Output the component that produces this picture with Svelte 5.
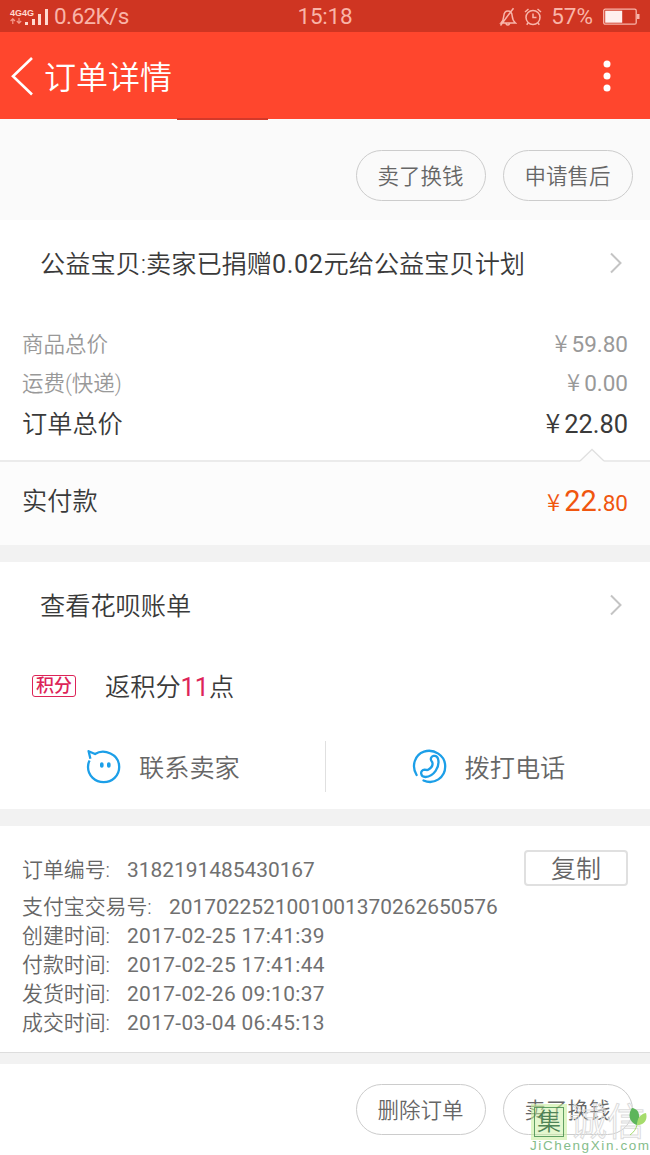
<script lang="ts">
  type Row = { label: string; value: string };

  const times: Row[] = [
    { label: '创建时间:', value: '2017-02-25 17:41:39' },
    { label: '付款时间:', value: '2017-02-25 17:41:44' },
    { label: '发货时间:', value: '2017-02-26 09:10:37' },
    { label: '成交时间:', value: '2017-03-04 06:45:13' }
  ];
</script>

{#snippet chevron()}
  <svg class="chevron" width="12" height="22" viewBox="0 0 12 22" fill="none" stroke="#c4c4c4" stroke-width="2">
    <path d="M1 1.5 10.5 11 1 20.5" />
  </svg>
{/snippet}

<div class="page">
  <div class="status">
    <div class="signal">
      <div class="nets">
        <span class="net">4G4G</span>
        <svg width="12" height="6" viewBox="0 0 12 6" fill="none" stroke="#f59b8d" stroke-width="1.2">
          <path d="M2.8 6V1M.6 3 2.8.8 5 3M9 0v5M6.8 3 9 5.2 11.2 3" />
        </svg>
      </div>
      <svg class="bars" width="24" height="17" viewBox="0 0 24 17" fill="#ffd9d0">
        <path d="M0 13h3v3H0zM7 10h3v6H7zM13 5h3v11h-3zM20 0h3v16h-3z" />
      </svg>
      <span class="speed">0.62K/s</span>
    </div>
    <span class="clock">15:18</span>
    <div class="status-right">
      <svg width="18" height="20" viewBox="0 0 18 20" fill="none" stroke="#f8b5aa" stroke-width="1.5">
        <path d="M2 16c2-2 2.600-4 2.800-7 .2-3 1.700-5 4.200-5s4 2 4.200 5c.2 3 .8 5 3.300 7zM7 16.500c.4 2 3 2 3.600 0M1.500 18.500 14.500 1.200" />
      </svg>
      <svg width="18" height="18" viewBox="0 0 18 18" fill="none" stroke="#f8b5aa" stroke-width="1.5">
        <circle cx="9" cy="9.500" r="7" />
        <path d="M9 5.500v4h3.500M1 4 4.500 1M13.500 1 17 4M4 15l-1.300 1.800M14 15l1.300 1.800" />
      </svg>
      <span class="percent">57%</span>
      <svg width="37" height="18" viewBox="0 0 37 18">
        <rect x=".7" y="1.200" width="32.500" height="15" rx="1.500" fill="none" stroke="#f8b5aa" stroke-width="1.300" />
        <rect x="2.200" y="2.700" width="17" height="12" fill="#fff0ee" />
        <rect x="34" y="6" width="2.500" height="5" fill="#f8b5aa" />
      </svg>
    </div>
  </div>

  <header>
    <svg width="24" height="40" viewBox="0 0 24 40" fill="none" stroke="#fff" stroke-width="2.600">
      <path d="M22 2 3 20.300 22 38.500" />
    </svg>
    <h1>订单详情</h1>
    <svg class="more" width="8" height="32" viewBox="0 0 8 32" fill="#fff">
      <circle cx="4" cy="4" r="3.500" /><circle cx="4" cy="16" r="3.500" /><circle cx="4" cy="28" r="3.500" />
    </svg>
    <i class="tab-mark"></i>
  </header>

  <div class="actions top">
    <button>卖了换钱</button>
    <button>申请售后</button>
  </div>

  <div class="link donate">
    <span>公益宝贝:卖家已捐赠<em>0.02</em>元给公益宝贝计划</span>
    {@render chevron()}
  </div>

  <div class="prices">
    <div class="price muted"><span>商品总价</span><b><i>¥</i>59.80</b></div>
    <div class="price muted"><span>运费(快递)</span><b><i>¥</i>0.00</b></div>
    <div class="price total"><span>订单总价</span><b><i>¥</i>22.80</b></div>
  </div>
  <div class="paid">
    <svg class="notch" width="26" height="14" viewBox="0 0 26 14">
      <path d="M1 13 13 1.500 25 13v1H1z" fill="#fcfcfc" />
      <path d="M1 13 13 1.500 25 13" fill="none" stroke="#e0e0e0" stroke-width="1.300" />
    </svg>
    <span>实付款</span>
    <b><i>¥</i><em>22</em>.80</b>
  </div>

  <div class="gap"></div>

  <div class="link bill">
    <span>查看花呗账单</span>
    {@render chevron()}
  </div>
  <div class="points">
    <span class="badge">积分</span>
    <span>返积分<em>11</em>点</span>
  </div>
  <div class="contact">
    <div class="contact-item">
      <svg width="36" height="36" viewBox="0 0 36 36" fill="none" stroke="#1c9fe8" stroke-width="2.300" stroke-linejoin="round">
        <path d="M4.400 9.800 2.600 2.200 9 5C18-.6 33.200 5 33.200 18c0 8.700-7 15.200-15.500 15.200S2 26.700 2 18c0-2.600.5-4.600 1.600-6.500" />
        <path d="M15.800 15v2M22.800 15v2" stroke-width="3.600" stroke-linecap="round" />
      </svg>
      <span>联系卖家</span>
    </div>
    <div class="contact-item">
      <svg width="36" height="36" viewBox="0 0 36 36" fill="none" stroke="#1c9fe8" stroke-width="2.300" stroke-linecap="round" stroke-linejoin="round">
        <path d="M4.600 26C-1 17 3 5.500 12 2.600c10-3.200 21 3.900 21.200 14.400C33.500 28.700 22 36.200 11.500 31.500" />
        <path d="M19 11c-1.200-4.300 5.500-6 7-1.300 2.300 8.500-4.500 18-12.500 18.300-5.300 0-6-7-.8-7.300 1.500 0 2.300.7 3.500 0 2.600-1.500 4.700-4 4.300-6.600-.2-1.200-1.200-1.900-1.500-3.100z" />
      </svg>
      <span>拨打电话</span>
    </div>
  </div>

  <div class="gap"></div>

  <div class="info">
    <div class="info-row number">
      <span>订单编号:</span><span class="value">3182191485430167</span>
      <button class="copy">复制</button>
    </div>
    <div class="info-row"><span class="wide">支付宝交易号:</span><span class="value">2017022521001001370262650576</span></div>
    {#each times as row}
      <div class="info-row"><span>{row.label}</span><span class="value time">{row.value}</span></div>
    {/each}
  </div>

  <div class="gap thin"></div>

  <div class="actions bottom">
    <button>删除订单</button>
    <button>卖了换钱</button>
    <div class="watermark">
      <div class="marks">
        <span class="seal">集</span>
        <span class="outline">诚信</span>
        <svg class="leaf" width="18" height="30" viewBox="0 0 18 30">
          <path d="M3 1c7 1 9 7 5 17C1 16-2 8 3 1z" fill="#5db55b" />
          <path d="M17 6c2 7-2 12-9 12 0-6 3-11 9-12z" fill="#a5dc6c" />
          <path d="M8 18c-1 4-3 7-7 10" fill="none" stroke="#a5dc6c" />
        </svg>
      </div>
      <span class="site">JiChengXin.com</span>
    </div>
  </div>
</div>

<style>
  :global(body) { margin: 0; background: #fff; }

  .page {
    width: 650px;
    height: 1155px;
    overflow: hidden;
    background: #fff;
    color: #3a3a3a;
    font: 350 25.2px/36px Roboto, 'Noto Sans CJK SC', sans-serif;
    white-space: nowrap;
  }

  .page * { box-sizing: border-box; }
  svg { display: block; flex-shrink: 0; }
  i, em { font-style: normal; }
  b, em { font-weight: 400; }

  button {
    padding: 0;
    border: 1px solid #ccc;
    background: transparent;
    color: #666;
    font: inherit;
  }

  .status {
    display: grid;
    grid-template-columns: 1fr auto 1fr;
    align-items: center;
    height: 32px;
    padding: 1px 10px 0;
    background: #cf3522;
    color: #f9b4a8;
    font: 22.5px/31px Roboto, sans-serif;
  }

  .signal, .status-right { display: flex; align-items: center; }
  .nets { width: 14px; }
  .net { display: block; width: 26px; font: bold 9px/9px 'Liberation Sans', sans-serif; color: #ffd9d0; }
  .bars { margin: 1px 0 0 1px; }
  .speed { margin-left: 5px; letter-spacing: -0.6px; }
  .clock { letter-spacing: -0.2px; }
  .status-right { justify-content: flex-end; }
  .status-right svg + svg { margin-left: 7px; }
  .percent { margin: 0 10px 0 9px; }

  header {
    position: relative;
    display: flex;
    align-items: center;
    height: 87px;
    padding: 0 39px 0 10px;
    background: #ff462d;
    color: #fff;
  }

  h1 { margin: 4px 0 0 10px; font-size: 32px; font-weight: 350; line-height: 44px; }
  .more { margin-left: auto; }

  .tab-mark {
    position: absolute;
    left: 177px;
    bottom: -1px;
    width: 91px;
    height: 2px;
    background: #d3392a;
  }

  .actions { display: flex; justify-content: flex-end; gap: 17px; padding-right: 17px; }
  .actions button { width: 130px; height: 51px; padding: 2px 1px 0 0; border-radius: 26px; font-size: 21.5px; }
  .top { height: 101px; padding-top: 31px; background: #fafafa; }

  .link { display: flex; align-items: center; justify-content: space-between; padding: 0 28px 0 40px; }
  .link span { margin-top: 4px; }
  .donate { height: 86px; }
  .donate em { letter-spacing: 0.6px; }

  .prices { height: 154px; padding: 19px 22px 0; }
  .price { display: flex; align-items: center; justify-content: space-between; height: 39px; }
  .price span { margin-top: 1px; }
  .price b, .paid b { font-size: 22.5px; }
  .price b { margin-top: -4px; }
  b i { margin-right: 4px; font-size: 1.06em; font-family: 'Noto Sans CJK SC', sans-serif; font-weight: 350; }
  .muted { color: #999; font-size: 21.5px; }
  .total { height: 43px; }
  .total b { font-size: 25.4px; }

  .paid {
    position: relative;
    display: flex;
    align-items: center;
    justify-content: space-between;
    height: 85px;
    padding: 0 22px 3px;
    border-top: 2px solid #ebebeb;
    background: #fcfcfc;
  }

  .paid b { color: #f0560f; }
  .paid em { font-size: 29px; }
  .notch { position: absolute; right: 45px; top: -14px; }

  .gap { height: 17px; background: #f2f2f2; }
  .bill { height: 86px; }

  .points { display: flex; align-items: center; height: 76px; padding-left: 32px; }
  .points span + span { margin-top: 4px; }
  .badge {
    width: 44px;
    height: 22px;
    margin-right: 29px;
    border: 1px solid #dd2458;
    border-radius: 3px;
    color: #dd2458;
    font-size: 18px;
    font-weight: 500;
    line-height: 20px;
    text-align: center;
  }
  .points em { color: #dd2458; }

  .contact { display: flex; height: 85px; padding-top: 17px; }
  .contact-item { flex: 1; display: flex; align-items: center; height: 51px; padding-left: 86px; gap: 17px; color: #666; }
  .contact-item span { margin-top: 4px; }
  .contact-item + .contact-item { border-left: 1px solid #e0e0e0; }

  .info { height: 226px; padding: 22px 22px 0; color: #666; font-size: 20.9px; }
  .info-row { display: flex; align-items: center; height: 29px; }
  .info-row span:first-child { width: 105px; }
  .info-row .wide:first-child { width: 147px; }
  .value { font-weight: 400; color: #707070; }
  .time { letter-spacing: 0.35px; }
  .number { height: 44px; }
  .copy { width: 104px; height: 36px; margin: -4px 0 0 auto; padding-top: 2px; border: 2px solid #e0e0e0; border-radius: 4px; font-size: 25px; line-height: 32px; }

  .thin { height: 12px; border-top: 1px solid #ddd; }

  .bottom { position: relative; height: 91px; padding-top: 20px; }
  .watermark { position: absolute; left: 530px; top: 41px; width: 120px; }
  .marks { display: flex; align-items: center; gap: 5px; height: 34px; }
  .seal {
    width: 30px;
    height: 30px;
    margin-left: 4px;
    border: 1.500px solid rgba(62, 138, 73, 0.8);
    box-shadow: 0 0 0 3px rgba(201, 239, 159, 0.6);
    background: rgba(201, 239, 159, 0.5);
    color: #4d8356;
    font-size: 24px;
    line-height: 29px;
    text-align: center;
  }
  .outline { color: transparent; font-size: 38px; line-height: 34px; -webkit-text-stroke: 1px #dcdcdc; }
  .leaf { position: absolute; right: 3px; top: 2px; }
  .site { display: block; color: #86bd8b; font: 13.5px/14px 'Liberation Sans', sans-serif; letter-spacing: 1.6px; }
</style>
